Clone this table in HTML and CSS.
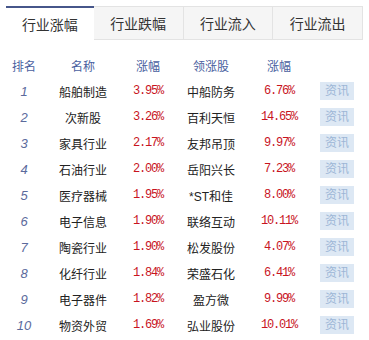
FILE: index.html
```html
<!DOCTYPE html>
<html>
<head>
<meta charset="utf-8">
<link rel="stylesheet" href="styles.css">
</head>
<body>
<div class="panel">
  <div class="tabs">
    <div class="tab active">行业涨幅</div>
    <div class="tab">行业跌幅</div>
    <div class="tab">行业流入</div>
    <div class="tab">行业流出</div>
  </div>
  <div class="table">
    <div class="row head">
      <span>排名</span><span>名称</span><span>涨幅</span><span>领涨股</span><span>涨幅</span><span></span>
    </div>
    <div class="row"><span class="rank">1</span><span class="name">船舶制造</span><span class="pct">3.95%</span><span class="name">中船防务</span><span class="pct">6.76%</span><span><a class="btn">资讯</a></span></div>
    <div class="row"><span class="rank">2</span><span class="name">次新股</span><span class="pct">3.26%</span><span class="name">百利天恒</span><span class="pct">14.65%</span><span><a class="btn">资讯</a></span></div>
    <div class="row"><span class="rank">3</span><span class="name">家具行业</span><span class="pct">2.17%</span><span class="name">友邦吊顶</span><span class="pct">9.97%</span><span><a class="btn">资讯</a></span></div>
    <div class="row"><span class="rank">4</span><span class="name">石油行业</span><span class="pct">2.00%</span><span class="name">岳阳兴长</span><span class="pct">7.23%</span><span><a class="btn">资讯</a></span></div>
    <div class="row"><span class="rank">5</span><span class="name">医疗器械</span><span class="pct">1.95%</span><span class="name">*ST和佳</span><span class="pct">8.00%</span><span><a class="btn">资讯</a></span></div>
    <div class="row"><span class="rank">6</span><span class="name">电子信息</span><span class="pct">1.90%</span><span class="name">联络互动</span><span class="pct">10.11%</span><span><a class="btn">资讯</a></span></div>
    <div class="row"><span class="rank">7</span><span class="name">陶瓷行业</span><span class="pct">1.90%</span><span class="name">松发股份</span><span class="pct">4.07%</span><span><a class="btn">资讯</a></span></div>
    <div class="row"><span class="rank">8</span><span class="name">化纤行业</span><span class="pct">1.84%</span><span class="name">荣盛石化</span><span class="pct">6.41%</span><span><a class="btn">资讯</a></span></div>
    <div class="row"><span class="rank">9</span><span class="name">电子器件</span><span class="pct">1.82%</span><span class="name">盈方微</span><span class="pct">9.99%</span><span><a class="btn">资讯</a></span></div>
    <div class="row"><span class="rank">10</span><span class="name">物资外贸</span><span class="pct">1.69%</span><span class="name">弘业股份</span><span class="pct">10.01%</span><span><a class="btn">资讯</a></span></div>
  </div>
</div>
</body>
</html>
```
FILE: styles.css
```css
html, body {
  margin: 0;
  padding: 0;
  background: #fff;
}
body {
  font-family: "Liberation Sans", "Noto Sans CJK SC", sans-serif;
  color: #333;
}
.panel {
  padding: 6px 6px 0 6px;
}
.tabs {
  display: flex;
  height: 34px;
}
.tab {
  width: 90px;
  box-sizing: border-box;
  height: 34px;
  background: #f5f5f5;
  border: 1px solid #e3e3e3;
  border-left: none;
  display: flex;
  align-items: center;
  justify-content: center;
  font-size: 14px;
  color: #333;
}
.tab.active {
  width: 88px;
  background: #fff;
  border: none;
  border-top: 2px solid #46568a;
}
.table {
  padding-top: 12px;
}
.row {
  display: grid;
  grid-template-columns: 36px 82px 48px 78px 58px 58px;
  height: 26px;
  align-items: center;
  text-align: center;
  font-size: 12px;
}
.row.head {
  color: #4a5fa0;
}
.rank {
  font-style: italic;
  font-size: 13px;
  color: #5b6a9c;
}
.name {
  color: #222;
}
.pct {
  font-family: "Liberation Mono", monospace;
  font-size: 12px;
  letter-spacing: -1.2px;
  color: #c8141e;
}
.btn {
  display: inline-block;
  width: 34px;
  height: 18px;
  line-height: 18px;
  background: #dde8f4;
  color: #9cb6d6;
  font-size: 12px;
}
```
